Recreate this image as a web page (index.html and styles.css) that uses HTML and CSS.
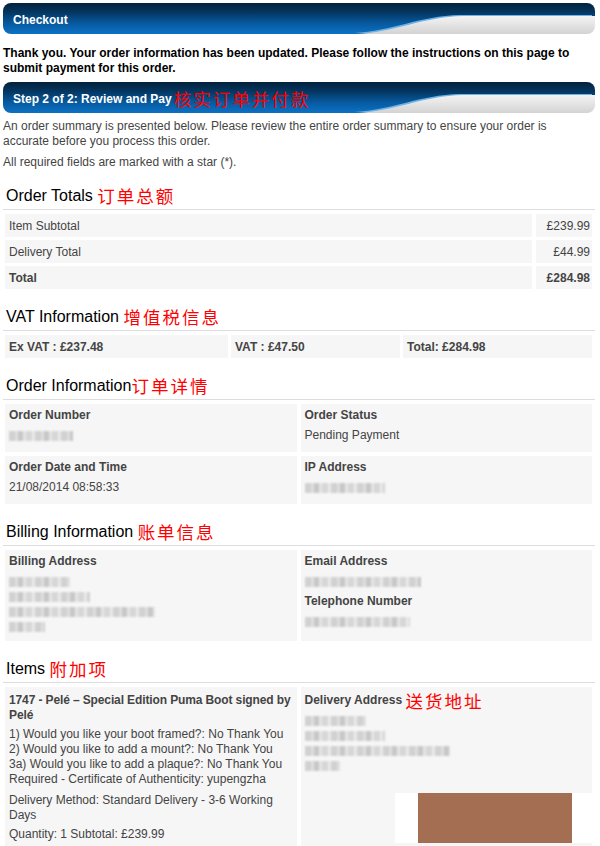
FILE: index.html
```html
<!DOCTYPE html>
<html lang="en">
<head>
<meta charset="utf-8">
<title>Checkout</title>
<link rel="stylesheet" href="styles.css">
</head>
<body>
<div class="page">
  <div class="bar"><span class="bar-title">Checkout</span></div>
  <p class="notice">Thank you. Your order information has been updated. Please follow the instructions on this page to submit payment for this order.</p>

  <div class="bar bar-step"><span class="bar-title">Step 2 of 2: Review and Pay</span><span class="cn">核实订单并付款</span></div>
  <p class="intro">An order summary is presented below. Please review the entire order summary to ensure your order is accurate before you process this order.</p>
  <p class="intro req">All required fields are marked with a star (*).</p>

  <section class="sec">
    <h2 class="sec-head">Order Totals <span class="cn">订单总额</span></h2>
    <div class="totals">
      <div class="cell">Item Subtotal</div><div class="cell num">£239.99</div>
      <div class="cell">Delivery Total</div><div class="cell num">£44.99</div>
      <div class="cell strong">Total</div><div class="cell num strong">£284.98</div>
    </div>
  </section>

  <section class="sec">
    <h2 class="sec-head">VAT Information <span class="cn">增值税信息</span></h2>
    <div class="vat">
      <div class="cell strong">Ex VAT : £237.48</div>
      <div class="cell strong">VAT : £47.50</div>
      <div class="cell strong">Total: £284.98</div>
    </div>
  </section>

  <section class="sec">
    <h2 class="sec-head">Order Information<span class="cn">订单详情</span></h2>
    <div class="pair">
      <div class="box">
        <div class="lbl">Order Number</div>
        <span class="blur w64"></span>
      </div>
      <div class="box">
        <div class="lbl">Order Status</div>
        <div class="val">Pending Payment</div>
      </div>
      <div class="box">
        <div class="lbl">Order Date and Time</div>
        <div class="val">21/08/2014 08:58:33</div>
      </div>
      <div class="box">
        <div class="lbl">IP Address</div>
        <span class="blur w80"></span>
      </div>
    </div>
  </section>

  <section class="sec">
    <h2 class="sec-head">Billing Information <span class="cn">账单信息</span></h2>
    <div class="pair">
      <div class="box box-bill">
        <div class="lbl">Billing Address</div>
        <div class="lines">
          <span class="blur w61"></span>
          <span class="blur w81"></span>
          <span class="blur w146"></span>
          <span class="blur w36"></span>
        </div>
      </div>
      <div class="box box-bill">
        <div class="lbl">Email Address</div>
        <span class="blur w116"></span>
        <div class="lbl lbl-next">Telephone Number</div>
        <span class="blur w105"></span>
      </div>
    </div>
  </section>

  <section class="sec">
    <h2 class="sec-head">Items <span class="cn">附加项</span></h2>
    <div class="pair">
      <div class="box box-item">
        <div class="lbl item-title">1747 - Pelé – Special Edition Puma Boot signed by Pelé</div>
        <div class="val opts">1) Would you like your boot framed?: No Thank You<br>2) Would you like to add a mount?: No Thank You<br>3a) Would you like to add a plaque?: No Thank You<br>Required - Certificate of Authenticity: yupengzha</div>
        <div class="val method">Delivery Method: Standard Delivery - 3-6 Working Days</div>
        <div class="val qty">Quantity: 1 Subtotal: £239.99</div>
      </div>
      <div class="box box-item">
        <div class="lbl lbl-addr">Delivery Address <span class="cn">送货地址</span></div>
        <div class="lines">
          <span class="blur w61"></span>
          <span class="blur w80"></span>
          <span class="blur w145"></span>
          <span class="blur w35"></span>
        </div>
        <div class="redact"><span class="redact-fill"></span></div>
      </div>
    </div>
  </section>
</div>
</body>
</html>
```

FILE: styles.css
```css
* { box-sizing: border-box; }

html, body {
  margin: 0;
  background: #fff;
}

body {
  font-family: "Liberation Sans", Arial, "Noto Sans CJK SC", sans-serif;
  font-size: 12px;
  line-height: 15px;
  color: #333;
}

.page {
  padding: 3px 5px 0 3px;
}

/* blue header bars */
.bar {
  height: 31px;
  border-radius: 8px;
  display: flex;
  align-items: center;
  padding: 3px 0 0 10px;
  background:
    url("data:image/svg+xml,%3Csvg xmlns='http://www.w3.org/2000/svg' width='250' height='31' viewBox='0 0 250 31'%3E%3Cdefs%3E%3ClinearGradient id='g' x1='0' y1='0' x2='0' y2='1'%3E%3Cstop offset='0' stop-color='%23f4f4f4'/%3E%3Cstop offset='1' stop-color='%23d3d3d3'/%3E%3C/linearGradient%3E%3C/defs%3E%3Cpath d='M12 31C50 29 78 14 118 13L250 13L250 31Z' fill='%236fb2e6' transform='translate(-3 -1)'/%3E%3Cpath d='M12 31C50 29 78 14 118 13L250 13L250 31Z' fill='url(%23g)'/%3E%3C/svg%3E") right top / 250px 31px no-repeat,
    linear-gradient(180deg, #03213a 0%, #043660 30%, #07599e 65%, #0b72c4 100%);
}

.bar-title {
  color: #fff;
  font-weight: bold;
  font-size: 12px;
}

.cn {
  font-family: "Noto Sans CJK SC", sans-serif;
  color: #f00;
  font-size: 17.5px;
  line-height: 20px;
  letter-spacing: 2px;
  font-weight: normal;
}

.bar .cn {
  margin-left: 2px;
}

.bar-step {
  margin-top: 6px;
}

.notice {
  margin: 12px 0 0;
  font-weight: bold;
  color: #000;
}

.intro {
  margin: 6px 0 0;
  color: #444;
}

.intro.req {
  margin-top: 6px;
}

/* sections */
.sec {
  margin-top: 18px;
}

.sec:first-of-type {
  margin-top: 16px;
}

.sec-head {
  margin: 0;
  padding: 0 3px 3px;
  border-bottom: 1px solid #ddd;
  font-size: 16px;
  line-height: 20px;
  font-weight: normal;
  color: #000;
  display: flex;
  align-items: center;
  white-space: pre;
}

.cell {
  background: #f6f6f6;
  padding: 5px 4px 3px;
  color: #444;
}

.strong {
  font-weight: bold;
}

.num {
  text-align: right;
  padding-right: 2px;
}

.totals {
  display: grid;
  grid-template-columns: 1fr 56px;
  gap: 3px 4px;
  margin: 4px 3px 0 2px;
}

.vat {
  display: grid;
  grid-template-columns: 223px 169px 1fr;
  gap: 3px;
  margin: 4px 3px 0 2px;
}

.pair {
  display: grid;
  grid-template-columns: 1fr 1fr;
  gap: 4px;
  margin: 4px 3px 0 2px;
}

.box {
  background: #f6f6f6;
  padding: 4px 4px 9px;
  color: #444;
}

.box-bill {
  padding-bottom: 7px;
}

.box-item {
  padding-top: 6px;
}

.lbl {
  font-weight: bold;
  color: #444;
  margin-bottom: 5px;
}

.lbl-addr {
  display: flex;
  align-items: center;
  height: 15px;
  white-space: pre;
}

.lbl-addr .cn {
  line-height: 15px;
}

.item-title {
  letter-spacing: -0.12px;
  margin-bottom: 4px;
}

.lbl-next {
  margin-top: 5px;
}

.val {
  color: #444;
}

.method {
  margin-top: 6px;
}

.qty {
  margin-top: 4px;
}

/* blurred private data */
.blur {
  display: block;
  height: 15px;
  padding: 3px 0 2px;
  background: repeating-linear-gradient(90deg,
    #c8c8c8 0 6px, #dadada 6px 9px, #bcbcbc 9px 14px,
    #e2e2e2 14px 17px, #cfcfcf 17px 23px, #e8e8e8 23px 26px) content-box;
  filter: blur(1px);
  opacity: 0.8;
}

.w35 { width: 35px; }
.w36 { width: 36px; }
.w61 { width: 61px; }
.w64 { width: 64px; }
.w80 { width: 80px; }
.w81 { width: 81px; }
.w105 { width: 105px; }
.w116 { width: 116px; }
.w145 { width: 145px; }
.w146 { width: 146px; }

.redact {
  display: flex;
  width: 198px;
  height: 50px;
  margin: 20px -5px 0 auto;
  background: #fff;
  padding-left: 23px;
}

.redact-fill {
  display: block;
  width: 154px;
  background: #a46e52;
}
```
